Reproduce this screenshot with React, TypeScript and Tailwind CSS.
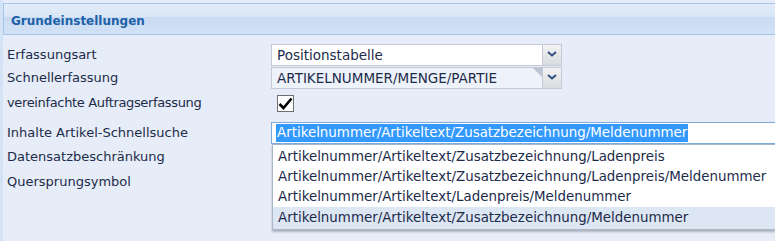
import React from 'react';

const font = { fontFamily: '"DejaVu Sans", Verdana, sans-serif' };

function Chevron() {
  return (
    <svg width="10" height="6" viewBox="0 0 10 6">
      <path d="M1 1 L5 4.5 L9 1" fill="none" stroke="#2f4f86" strokeWidth="2" />
    </svg>
  );
}

function Select({ value, tinted }: { value: string; tinted?: boolean }) {
  return (
    <div className="flex h-[22px] w-[291px]">
      <div
        className={`relative flex-1 border border-[#c3cad6] flex items-center pl-[5px] text-[13.5px] text-[#1c2b4a] ${
          tinted ? 'bg-[#eef2fb]' : 'bg-white'
        }`}
      >
        {value}
        {tinted && (
          <span className="absolute right-0 top-0 w-0 h-0 border-t-[9px] border-t-[#b9c3d1] border-l-[9px] border-l-transparent" />
        )}
      </div>
      <div className="w-[19px] border border-l-0 border-[#c3cad6] bg-gradient-to-b from-[#f3f3f3] to-[#d9dcdf] flex items-start justify-center pt-[6px]">
        <Chevron />
      </div>
    </div>
  );
}

const options = [
  'Artikelnummer/Artikeltext/Zusatzbezeichnung/Ladenpreis',
  'Artikelnummer/Artikeltext/Zusatzbezeichnung/Ladenpreis/Meldenummer',
  'Artikelnummer/Artikeltext/Ladenpreis/Meldenummer',
  'Artikelnummer/Artikeltext/Zusatzbezeichnung/Meldenummer',
];

export default function App() {
  return (
    <div className="w-[775px] h-[241px] overflow-hidden bg-[#e6edf8] flex text-[#1c2b4a]" style={font}>
      <div className="w-[3px] shrink-0 bg-[#d3e2f5]" />
      <div className="flex-1 flex flex-col">
        <div className="relative mt-[3px] h-[32px] border-t border-l border-b border-[#a6c3ea] flex flex-col">
          <div className="h-[13px] bg-gradient-to-b from-[#e4edf9] to-[#d9e6f6]" />
          <div className="flex-1 bg-gradient-to-b from-[#c9dbf3] to-[#d3e2f5]" />
          <div className="absolute top-[8px] left-[7px] text-[12px] font-bold text-[#1d61a8]">Grundeinstellungen</div>
        </div>
        <div className="flex flex-col pl-[4px] pt-[9px] text-[13px]">
          <div className="flex items-center h-[22px]">
            <div className="w-[264px]">Erfassungsart</div>
            <Select value="Positionstabelle" />
          </div>
          <div className="flex items-center h-[22px] mt-[1px]">
            <div className="w-[264px]">Schnellerfassung</div>
            <Select value="ARTIKELNUMMER/MENGE/PARTIE" tinted />
          </div>
          <div className="flex items-center h-[28px]">
            <div className="w-[270px] tracking-[-0.35px]">vereinfachte Auftragserfassung</div>
            <div className="w-[17px] h-[17px] border border-[#6e6e6e] bg-white flex items-center justify-center">
              <svg width="15" height="13" viewBox="0 0 15 13">
                <path d="M1.5 7 L5.5 11 L13.5 1.5" fill="none" stroke="#000" strokeWidth="2.6" />
              </svg>
            </div>
          </div>
          <div className="relative flex items-center h-[22px] mt-[5px]">
            <div className="w-[264px]">Inhalte Artikel-Schnellsuche</div>
            <div className="flex-1 h-[22px] border border-r-0 border-[#7faadf] bg-white flex items-center pl-[4px] text-[13.4px]">
              <span className="bg-[#3399ff] text-white leading-[18px] px-[1px]">
                Artikelnummer/Artikeltext/Zusatzbezeichnung/Meldenummer
              </span>
            </div>
            <div className="absolute left-[265px] top-[22px] right-0 z-10 bg-white border border-r-0 border-[#a9b7c9] shadow-[0_2px_2px_rgba(0,0,0,0.25)] flex flex-col text-[13.4px]">
              {options.map((o, i) => (
                <div
                  key={o}
                  className={`h-[20px] flex items-center pl-[5px] ${i === options.length - 1 ? 'bg-[#dde6f3] h-[22px]' : ''} ${i === 0 ? 'mt-[2px]' : ''}`}
                >
                  {o}
                </div>
              ))}
            </div>
          </div>
          <div className="flex items-center h-[22px] mt-[2px]">Datensatzbeschränkung</div>
          <div className="flex items-center h-[22px] mt-[3px]">Quersprungsymbol</div>
        </div>
      </div>
    </div>
  );
}
